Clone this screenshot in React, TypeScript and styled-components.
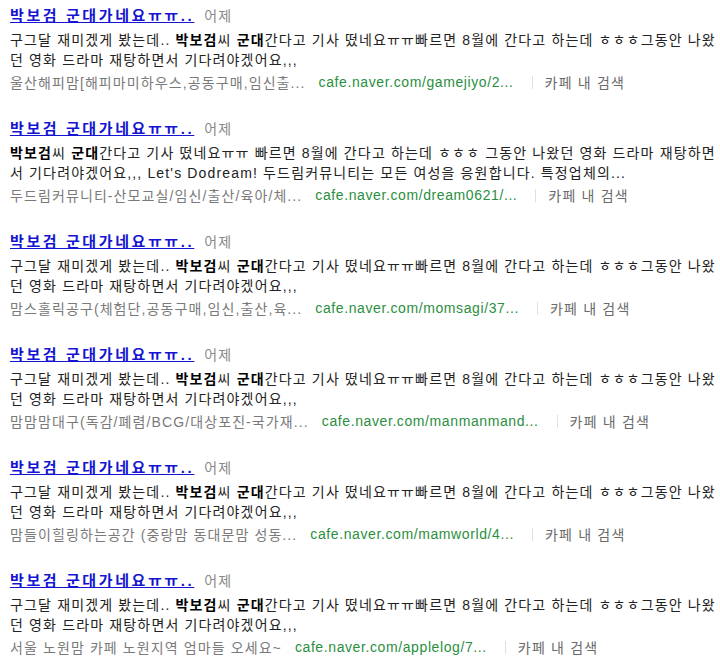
import React from 'react'
import styled, { createGlobalStyle } from 'styled-components'

const GlobalStyle = createGlobalStyle`
  html, body {
    margin: 0;
    padding: 0;
    background: #ffffff;
  }
  body {
    font-family: 'Liberation Sans', 'Noto Sans CJK KR', sans-serif;
  }
`

const List = styled.ul`
  list-style: none;
  margin: 0;
  padding: 7px 0 0 10px;
  width: 710px;
`

const Item = styled.li`
  display: flex;
  flex-direction: column;
  padding-bottom: 28px;
`

const TitleRow = styled.div`
  display: flex;
  align-items: baseline;
  gap: 10px;
  height: 18px;
  line-height: 18px;
`

const TitleLink = styled.a`
  font-size: 15px;
  font-weight: bold;
  letter-spacing: 2.6px;
  color: #1414d2;
  text-decoration: underline;
  cursor: pointer;
`

const DateText = styled.span`
  font-size: 14px;
  letter-spacing: 1px;
  color: #888888;
`

const Snippet = styled.p`
  margin: 5px 0 0 0;
  font-size: 14px;
  letter-spacing: 1.15px;
  line-height: 20px;
  color: #222222;
  height: 40px;
  overflow: hidden;

  b {
    color: #000000;
  }
`

const MetaRow = styled.div`
  display: flex;
  align-items: center;
  margin-top: 2px;
  height: 20px;
  font-size: 14px;
  white-space: nowrap;
`

const Source = styled.span`
  color: #7a7a7a;
  letter-spacing: 1.1px;
`

const Url = styled.span`
  color: #2a8f3e;
  letter-spacing: 0.6px;
  margin-left: 13px;
`

const Divider = styled.span`
  width: 1px;
  height: 13px;
  background: #e0e0e0;
  margin: 0 12px 0 18px;
`

const CafeSearch = styled.a`
  color: #6a6a6a;
  letter-spacing: 1.2px;
  cursor: pointer;
`

type Result = {
  snippet: React.ReactNode
  source: string
  url: string
}

const defaultSnippet = (
  <>
    구그달 재미겠게 봤는데.. <b>박보검</b>씨 <b>군대</b>간다고 기사 떴네요ㅠㅠ빠르면 8월에 간다고 하는데 ㅎㅎㅎ그동안
    나왔던 영화 드라마 재탕하면서 기다려야겠어요,,,
  </>
)

const results: Result[] = [
  {
    snippet: defaultSnippet,
    source: '울산해피맘[해피마미하우스,공동구매,임신출...',
    url: 'cafe.naver.com/gamejiyo/2...',
  },
  {
    snippet: (
      <>
        <b>박보검</b>씨 <b>군대</b>간다고 기사 떴네요ㅠㅠ 빠르면 8월에 간다고 하는데 ㅎㅎㅎ 그동안 나왔던 영화 드라마
        재탕하면서 기다려야겠어요,,, Let's Dodream! 두드림커뮤니티는 모든 여성을 응원합니다. 특정업체의...
      </>
    ),
    source: '두드림커뮤니티-산모교실/임신/출산/육아/체...',
    url: 'cafe.naver.com/dream0621/...',
  },
  {
    snippet: defaultSnippet,
    source: '맘스홀릭공구(체험단,공동구매,임신,출산,육...',
    url: 'cafe.naver.com/momsagi/37...',
  },
  {
    snippet: defaultSnippet,
    source: '맘맘맘대구(독감/폐렴/BCG/대상포진-국가재...',
    url: 'cafe.naver.com/manmanmand...',
  },
  {
    snippet: defaultSnippet,
    source: '맘들이힐링하는공간 (중랑맘 동대문맘 성동...',
    url: 'cafe.naver.com/mamworld/4...',
  },
  {
    snippet: defaultSnippet,
    source: '서울 노원맘 카페 노원지역 엄마들 오세요~',
    url: 'cafe.naver.com/applelog/7...',
  },
]

const ResultItem: React.FC<Result> = ({ snippet, source, url }) => (
  <Item>
    <TitleRow>
      <TitleLink>박보검 군대가네요ㅠㅠ..</TitleLink>
      <DateText>어제</DateText>
    </TitleRow>
    <Snippet>{snippet}</Snippet>
    <MetaRow>
      <Source>{source}</Source>
      <Url>{url}</Url>
      <Divider />
      <CafeSearch>카페 내 검색</CafeSearch>
    </MetaRow>
  </Item>
)

const App: React.FC = () => (
  <>
    <GlobalStyle />
    <List>
      {results.map((r, i) => (
        <ResultItem key={i} {...r} />
      ))}
    </List>
  </>
)

export default App
